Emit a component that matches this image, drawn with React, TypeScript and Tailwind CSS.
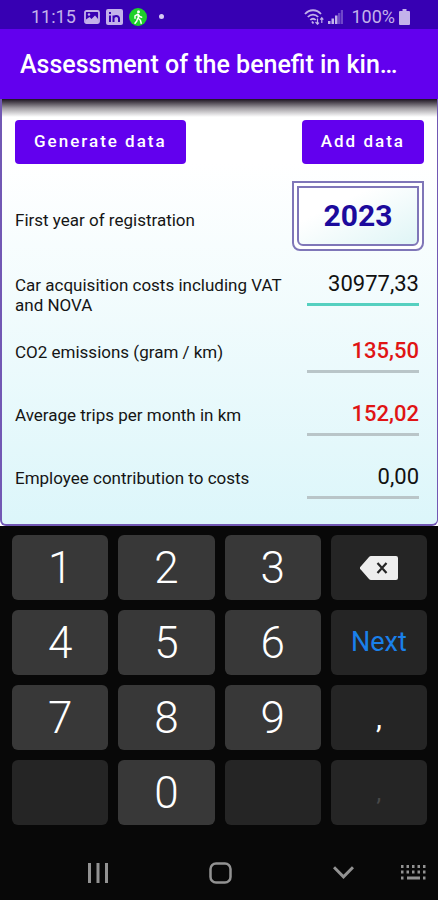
import { useState } from "react";

type Field = {
  id: string;
  label: string;
  value: string;
  active?: boolean;
  warn?: boolean;
};

const FIELDS: Field[] = [
  {
    id: "cost",
    label: "Car acquisition costs including VAT and NOVA",
    value: "30977,33",
    active: true,
  },
  { id: "co2", label: "CO2 emissions (gram / km)", value: "135,50", warn: true },
  { id: "trips", label: "Average trips per month in km", value: "152,02", warn: true },
  { id: "contribution", label: "Employee contribution to costs", value: "0,00" },
];

function StatusBar() {
  return (
    <div className="flex h-[29px] items-center justify-between bg-[#3700b3] pt-1 pr-7 pl-[31px] text-lg text-[#c3b2ea]">
      <div className="flex items-center">
        <span className="leading-6">11:15</span>
        <svg className="ml-2 h-[14px] w-4" viewBox="0 0 16 14" fill="none">
          <rect x="1" y="1" width="14" height="12" rx="1.5" stroke="currentColor" strokeWidth="1.8" />
          <path d="M2 12V9.500l3.500-2.500 2 2L11 5.500l3.500 4V12z" fill="currentColor" />
          <circle cx="5" cy="4.500" r="1.200" fill="currentColor" />
        </svg>
        <svg className="ml-[6px] h-4 w-[17px]" viewBox="0 0 17 16">
          <rect width="17" height="16" rx="2" fill="currentColor" />
          <g fill="none" stroke="#3700b3" strokeWidth="2">
            <path d="M4 6.500V13M4 3v2M7.500 13V6.500M7.500 9.500c0-3 5.500-3.500 5.500 0V13" />
          </g>
        </svg>
        <svg className="ml-[6px] h-[18px] w-[18px]" viewBox="0 0 18 18">
          <circle cx="9" cy="9" r="9" fill="#1fd02b" />
          <circle cx="9.500" cy="3.800" r="1.500" fill="#fff" />
          <path
            d="M9 6.200l-3 1.600v2.400M9 6.200l.4 4.300 2 1.700.8 3M8.600 10.500l-.8 2.500-1.800 2.200M9.300 6.500l1.400 2 2 .8"
            fill="none"
            stroke="#fff"
            strokeWidth="1.500"
            strokeLinecap="round"
            strokeLinejoin="round"
          />
        </svg>
        <span className="ml-3 h-[5px] w-[5px] rounded-full bg-[#d6c9f5]" />
      </div>
      <div className="flex items-center">
        <svg className="h-4 w-5" viewBox="0 0 20 16" fill="none" stroke="currentColor" strokeWidth="1.800">
          <path d="M1 5C5.500 0 12.500 0 17 5M3.800 8c3-3.200 7.400-3.200 10.400 0M6.300 11c1.600-1.700 3.800-1.700 5.400 0" />
          <path d="M8 12.500l1.500 2" />
          <path d="M13.500 9.500v5.500M11.500 13l2 2.200 1.500-1.600M17.800 14V9M16.300 10.600l1.500-1.800 1.500 1.800" strokeWidth="1.200" />
        </svg>
        <svg className="ml-1 h-[14px] w-[15px]" viewBox="0 0 15 14" fill="currentColor">
          <path d="M0 11h2.500v3H0zM3.500 8.500H6V14H3.500zM7 5.500h2.500V14H7z" />
          <path d="M10 3h2.300v11H10zM12.800 0H15v14h-2.200z" opacity=".4" />
        </svg>
        <span className="ml-2 leading-6">100%</span>
        <svg className="ml-1 h-4 w-[11px]" viewBox="0 0 11 16" fill="currentColor">
          <path d="M3.500 0h4v2H10a1 1 0 011 1v12a1 1 0 01-1 1H1a1 1 0 01-1-1V3a1 1 0 011-1h2.500z" />
        </svg>
      </div>
    </div>
  );
}

function FieldRow({ field }: { field: Field }) {
  const [value, setValue] = useState(field.value);
  return (
    <div className="flex min-h-[50px] items-start justify-between">
      <label htmlFor={field.id} className="max-w-[280px] pt-3.5 text-[17px] leading-5">
        {field.label}
      </label>
      <input
        id={field.id}
        inputMode="decimal"
        value={value}
        onChange={(e) => setValue(e.target.value)}
        className={`mr-[5px] h-[45px] w-28 shrink-0 bg-transparent pt-0.5 text-right text-[22px] outline-none ${
          field.active ? "border-b-3 border-[#55d0c0]" : "border-b-3 border-[#b9c5c8]"
        } ${field.warn ? "font-medium text-[#e01414]" : "text-[#111]"}`}
      />
    </div>
  );
}

function Key({ label }: { label: string }) {
  return (
    <button className="h-[65px] rounded-md bg-[#383838] text-[44px] leading-none font-light text-white">
      {label}
    </button>
  );
}

function Keypad() {
  return (
    <div className="grid grid-cols-4 gap-[10px] pt-[9px] pr-[11px] pb-5 pl-3">
      <Key label="1" />
      <Key label="2" />
      <Key label="3" />
      <button aria-label="Delete" className="flex h-[65px] items-center justify-center rounded-md bg-[#252525]">
        <svg className="h-6 w-[38px]" viewBox="0 0 38 24">
          <path d="M11 0h25a2 2 0 012 2v20a2 2 0 01-2 2H11a3 3 0 01-2-1L.7 13.500a2 2 0 010-3L9 1a3 3 0 012-1z" fill="#eee" />
          <path d="M17.500 7l9 10M26.500 7l-9 10" stroke="#252525" strokeWidth="2.200" />
        </svg>
      </button>
      <Key label="4" />
      <Key label="5" />
      <Key label="6" />
      <button className="h-[65px] rounded-md bg-[#252525] text-[27px] text-[#1a80ea]">Next</button>
      <Key label="7" />
      <Key label="8" />
      <Key label="9" />
      <button className="h-[65px] rounded-md bg-[#252525] text-3xl leading-none text-white">,</button>
      <div className="h-[65px] rounded-md bg-[#252525]" />
      <Key label="0" />
      <div className="h-[65px] rounded-md bg-[#252525]" />
      <button className="h-[65px] rounded-md bg-[#252525] text-2xl text-[#484848]">,</button>
    </div>
  );
}

function NavBar() {
  return (
    <nav className="grid h-[55px] grid-cols-[88fr_157fr_89fr_50fr] items-center justify-items-center pl-[54px] text-[#929292]">
      <button aria-label="Recent apps">
        <svg className="h-5 w-5" viewBox="0 0 20 20" fill="currentColor">
          <path d="M0 0h3v20H0zM8.500 0h3v20h-3zM17 0h3v20h-3z" />
        </svg>
      </button>
      <button aria-label="Home">
        <svg className="h-[22px] w-[23px]" viewBox="0 0 23 22" fill="none" stroke="currentColor" strokeWidth="2.500">
          <rect x="1.500" y="1.500" width="20" height="19" rx="5.500" />
        </svg>
      </button>
      <button aria-label="Hide keyboard">
        <svg className="h-[13px] w-[21px]" viewBox="0 0 21 13" fill="none" stroke="currentColor" strokeWidth="3">
          <path d="M1 1.200l9.500 9.600L20 1.200" />
        </svg>
      </button>
      <button aria-label="Switch keyboard">
        <svg className="h-[15px] w-[25px]" viewBox="0 0 25 15" fill="currentColor">
          <path d="M0 0h2.500v3H0zM5.500 0H8v3H5.500zM11 0h2.500v3H11zM16.500 0H19v3h-2.500zM22 0h2.500v3H22zM0 5.500h2.500v3H0zM5.500 5.500H8v3H5.500zM11 5.500h2.500v3H11zM16.500 5.500H19v3h-2.500zM22 5.500h2.500v3H22zM0 11.500h2.500v3H0zM6 11.500h13v3H6zM22 11.500h2.500v3H22z" />
        </svg>
      </button>
    </nav>
  );
}

export default function App() {
  return (
    <div className="flex min-h-screen flex-col bg-[#080808] font-[Roboto,sans-serif]">
      <StatusBar />
      <header className="flex h-[70px] items-center bg-[#6200ee] px-5 pt-0.5">
        <h1 className="truncate text-[25px] leading-8 font-medium text-white">
          Assessment of the benefit in kin…
        </h1>
      </header>

      <main className="bg-white">
        <div className="rounded-b-md border-r border-b-2 border-l-2 border-[#7258b4] bg-linear-to-b from-white from-15% to-[#dcf6fa] pb-5 text-[#151515]">
          {/* app bar shadow */}
          <div className="h-[18px] bg-linear-to-b from-[#1c1420] via-[#77727a]/70 to-transparent" />
          <form className="px-[13px] pt-[3px]" onSubmit={(e) => e.preventDefault()}>
            <div className="flex justify-between">
              <button className="h-11 rounded-sm bg-[#6200ee] px-[19px] text-[17px] font-medium tracking-[2px] text-white">
                Generate data
              </button>
              <button className="h-11 rounded-sm bg-[#6200ee] px-[19px] text-[17px] font-medium tracking-[2px] text-white">
                Add data
              </button>
            </div>

            <div className="mt-[17px] mb-[10px] flex items-center justify-between">
              <label htmlFor="year" className="pt-2 text-[17px] leading-5">
                First year of registration
              </label>
              <div className="h-[70px] w-[132px] rounded-b-lg border-2 border-[#7f76b8] bg-white p-[3px]">
                <button
                  id="year"
                  className="h-full w-full rounded-b-md border-2 border-[#7f76b8] bg-linear-to-br from-white from-30% to-[#dff5f6] text-3xl font-bold text-[#1c0a9c]"
                >
                  2023
                </button>
              </div>
            </div>

            <div className="flex flex-col gap-[13px]">
              {FIELDS.map((f) => (
                <FieldRow key={f.id} field={f} />
              ))}
            </div>
          </form>
        </div>
      </main>

      <Keypad />
      <NavBar />
    </div>
  );
}
